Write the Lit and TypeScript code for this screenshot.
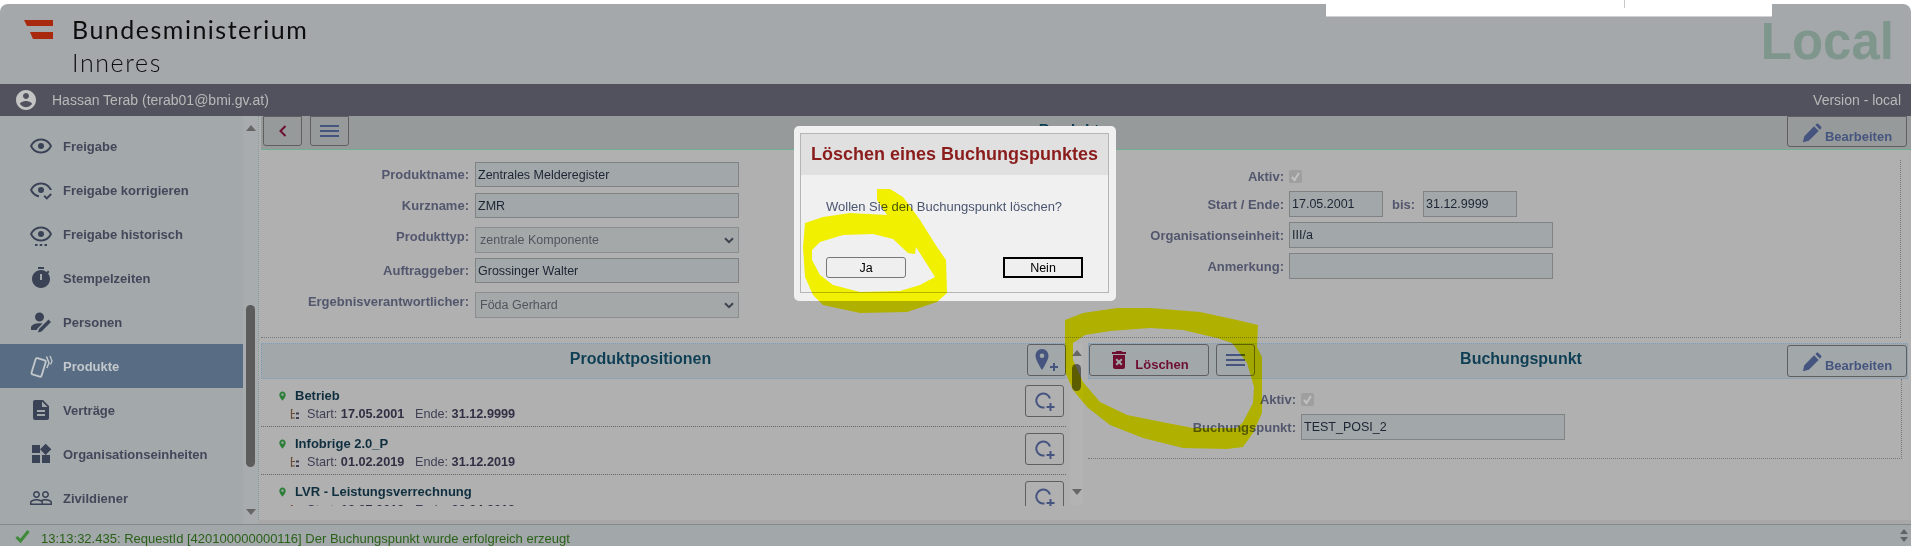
import { LitElement, html, css, svg } from "lit";
import { customElement } from "lit/decorators.js";

const P = {
  eye: "M12 6.5c3.79 0 7.17 2.13 8.82 5.5-1.65 3.37-5.02 5.5-8.82 5.5S4.83 15.37 3.18 12C4.83 8.63 8.21 6.5 12 6.5m0-2C7 4.5 2.73 7.61 1 12c1.73 4.39 6 7.5 11 7.5s9.27-3.11 11-7.5c-1.73-4.39-6-7.5-11-7.5zM12 9a3 3 0 1 0 0 6 3 3 0 0 0 0-6z",
  eyeCheck: "M12 4.5C7 4.5 2.73 7.61 1 12c1.5 3.8 4.9 6.6 9 7.3v-2.1C7 16.6 4.6 14.700 3.180 12 4.830 8.630 8.210 6.500 12 6.500s7.170 2.130 8.820 5.500h2.180C21.270 7.610 17 4.500 12 4.500zM12 9a3 3 0 1 0 0 6 3 3 0 0 0 0-6zM14.500 18.500l1.400-1.400 1.900 1.900 3.700-3.700 1.400 1.400-5.100 5.100z",
  eyeDots: "M12 4.500C7 4.500 2.730 7.610 1 12c1.730 4.390 6 7.500 11 7.500s9.270-3.110 11-7.500c-1.730-4.390-6-7.500-11-7.500zm0 2c3.790 0 7.170 2.130 8.820 5.500-1.650 3.370-5.020 5.500-8.820 5.500S4.830 15.370 3.180 12C4.830 8.630 8.210 6.500 12 6.500zM12 9a3 3 0 1 0 0 6 3 3 0 0 0 0-6zM6 22h2.500v2H6zm4.700 0h2.500v2h-2.500zm4.800 0H18v2h-2.500z",
  timer: "M15 1H9v2h6V1zm-4 13h2V8h-2v6zm8.030-6.610l1.420-1.420c-.43-.51-.9-.99-1.410-1.410l-1.420 1.420C16.070 4.740 14.120 4 12 4c-4.970 0-9 4.030-9 9s4.020 9 9 9 9-4.030 9-9c0-2.120-.74-4.070-1.970-5.610z",
  person: "M10.500 2.500a4.500 4.500 0 1 1 0 9 4.500 4.500 0 0 1 0-9zM2 20v-2.500c0-2.800 4.800-4.300 8.500-4.300 1 0 2 .1 3 .3L8.300 18.700 7.700 20zM19.500 9.500l2.500 2.500-9.500 9.500-3.500 1 1-3.500z",
  doc: "M14 2H6c-1.100 0-2 .9-2 2v16c0 1.100.9 2 2 2h12c1.100 0 2-.9 2-2V8l-6-6zm2 16H8v-2h8v2zm0-4H8v-2h8v2zm-3-5V3.500L18.500 9H13z",
  widgets: "M13 13v8h8v-8h-8zM3 21h8v-8H3v8zM3 3v8h8V3H3zm13.660-1.310L11 7.340 16.660 13l5.660-5.660-5.660-5.650z",
  people: "M16.500 13c-1.200 0-3.070.34-4.500 1-1.430-.67-3.300-1-4.500-1C5.330 13 1 14.080 1 16.250V19h22v-2.750c0-2.170-4.330-3.250-6.500-3.250zm-4 4.500h-10v-1.250c0-.54 2.560-1.750 5-1.750s5 1.210 5 1.750v1.250zm9 0H14v-1.250c0-.46-.2-.86-.52-1.220.88-.3 1.960-.53 3.020-.53 2.440 0 5 1.210 5 1.750v1.250zM7.500 12c1.930 0 3.500-1.570 3.500-3.500S9.430 5 7.500 5 4 6.570 4 8.500 5.570 12 7.500 12zm0-5.500c1.100 0 2 .9 2 2s-.9 2-2 2-2-.9-2-2 .9-2 2-2zm9 5.500c1.930 0 3.500-1.570 3.500-3.500S18.430 5 16.500 5 13 6.570 13 8.500s1.570 3.500 3.500 3.500zm0-5.500c1.100 0 2 .9 2 2s-.9 2-2 2-2-.9-2-2 .9-2 2-2z",
  account: "M12 2C6.480 2 2 6.480 2 12s4.480 10 10 10 10-4.480 10-10S17.520 2 12 2zm0 3c1.660 0 3 1.340 3 3s-1.340 3-3 3-3-1.340-3-3 1.340-3 3-3zm0 14.200c-2.500 0-4.710-1.280-6-3.220.03-1.990 4-3.080 6-3.080 1.990 0 5.970 1.090 6 3.080-1.290 1.940-3.500 3.220-6 3.220z",
  trash: "M6 19c0 1.100.9 2 2 2h8c1.100 0 2-.9 2-2V7H6v12zm2.460-7.120l1.410-1.410L12 12.590l2.120-2.120 1.410 1.410L13.410 14l2.120 2.120-1.410 1.410L12 15.410l-2.120 2.120-1.410-1.410L10.590 14l-2.130-2.120zM15.500 4l-1-1h-5l-1 1H5v2h14V4z",
  pencil: "M1 23 l1.800-7.200 L14.500 4 l5.500 5.500 L8.200 21.200 z M16 2.500 l1.300-1.300 c.7-.7 1.700-.7 2.400 0 l3.100 3.100 c.7.7.7 1.700 0 2.400 L21.500 8 z",
  pin: "M12 2C8.130 2 5 5.130 5 9c0 5.250 7 13 7 13s7-7.750 7-13c0-3.870-3.130-7-7-7zm0 9.500a2.500 2.500 0 1 1 0-5 2.500 2.500 0 0 1 0 5z",
};

const icon = (d: string, cls: string) =>
  html`<svg class="ic ${cls}" viewBox="0 0 24 24" aria-hidden="true">${svg`<path fill-rule="evenodd" d=${d}></path>`}</svg>`;

const cards = html`<svg class="ic side-ic" viewBox="0 0 24 24" aria-hidden="true">
  ${svg`<rect x="4.500" y="5" width="10.500" height="17" rx="1.500" transform="rotate(17 10 13)" fill="none" stroke="currentColor" stroke-width="1.800"></rect>
  <path d="M17.500 2.500 L20 9 L17.800 14" fill="none" stroke="currentColor" stroke-width="1.500"></path>
  <path d="M21 2 L23 7 L21.500 10.500" fill="none" stroke="currentColor" stroke-width="1.300"></path>`}
</svg>`;

const menuLines = html`<svg class="ic burger" viewBox="0 0 19 12" aria-hidden="true">
  ${svg`<path d="M0 1h19M0 6h19M0 11h19" fill="none" stroke="currentColor" stroke-width="2"></path>`}
</svg>`;

const chevron = html`<svg class="sel-arrow" viewBox="0 0 10 7" aria-hidden="true">
  ${svg`<path d="M1 1.200 L5 5.200 L9 1.200" fill="none" stroke="currentColor" stroke-width="2"></path>`}
</svg>`;

const checkBox = html`<span class="check"><svg viewBox="0 0 13 13" aria-hidden="true">
  ${svg`<path d="M3 7 L5.500 10 L10 3" fill="none" stroke="#c2c2c2" stroke-width="2"></path>`}
</svg></span>`;

const pinPlus = html`<svg class="ic pinplus" viewBox="0 0 24 23" aria-hidden="true">
  ${svg`<path fill-rule="evenodd" d="M7 0C3.200 0 .5 3 .5 6.800.5 11.500 7 21 7 21s6.500-9.500 6.500-14.200C13.500 3 10.800 0 7 0zm0 9a2.300 2.300 0 1 1 0-4.600A2.300 2.300 0 0 1 7 9z"></path>
  <path d="M15 18h8M19 14v8" fill="none" stroke="currentColor" stroke-width="2"></path>`}
</svg>`;

const ringPlus = html`<svg class="ic ringplus" viewBox="0 0 20 19" aria-hidden="true">
  ${svg`<path d="M9.500 15.500 A7 7 0 1 1 15 6.500" fill="none" stroke="currentColor" stroke-width="2"></path>
  <path d="M11.500 15h8M15.500 11v8" fill="none" stroke="currentColor" stroke-width="2"></path>`}
</svg>`;

const tree = html`<svg class="tree" viewBox="0 0 10 10" aria-hidden="true">
  ${svg`<path d="M1 0h2M1.500 0v10M1.500 4.500H5M1.500 9H5" fill="none" stroke="#6c4a38" stroke-width="1.200"></path>
  <path d="M6 3.500h3v2H6zM6 8h3v2H6z" fill="#3d3d55"></path>`}
</svg>`;

const arrowUp = html`<span class="tri up"></span>`;
const arrowDown = html`<span class="tri down"></span>`;

const NAV = [
  { t: "Freigabe", i: icon(P.eye, "side-ic") },
  { t: "Freigabe korrigieren", i: icon(P.eyeCheck, "side-ic") },
  { t: "Freigabe historisch", i: icon(P.eyeDots, "side-ic") },
  { t: "Stempelzeiten", i: icon(P.timer, "side-ic") },
  { t: "Personen", i: icon(P.person, "side-ic") },
  { t: "Produkte", i: cards, active: true },
  { t: "Verträge", i: icon(P.doc, "side-ic") },
  { t: "Organisationseinheiten", i: icon(P.widgets, "side-ic") },
  { t: "Zivildiener", i: icon(P.people, "side-ic") },
];

const POS = [
  { n: "Betrieb", s: "17.05.2001", e: "31.12.9999" },
  { n: "Infobrige 2.0_P", s: "01.02.2019", e: "31.12.2019" },
  { n: "LVR - Leistungsverrechnung", s: "18.07.2013", e: "30.04.2019" },
];

@customElement("app-root")
export class AppRoot extends LitElement {
  static styles = css`
    :host { display: block; width: 1913px; height: 546px; overflow: hidden; background: #fff; font-family: "Liberation Sans", Arial, sans-serif; }
    * { box-sizing: border-box; }
    .page { position: relative; width: 1911px; height: 546px; padding-top: 4px; display: flex; flex-direction: column; }
    .ic { fill: currentColor; display: block; flex: none; }

    .head { height: 80px; background: #a4a8aa; border-radius: 8px 8px 0 0; display: flex; padding: 16px 17px 0 24px; flex: none; }
    .flag { width: 29px; height: 19px; flex: none; }
    .brand { margin-left: 19px; margin-top: -7px; color: #0d0d0d; font-family: Lato, sans-serif; font-size: 25px; line-height: 33px; letter-spacing: 1.5px; }
    .brand .thin { font-weight: 300; letter-spacing: 1.6px; }
    .local { margin-left: auto; margin-top: -3px; font-weight: 700; font-size: 51px; line-height: 50px; color: #7f968d; }
    .tab { position: absolute; left: 1326px; top: 0; width: 446px; height: 17px; background: #fff; border-bottom: 1px solid #d0d0d0; }
    .tab i { position: absolute; left: 298px; top: 0; width: 1px; height: 8px; background: #c8c8c8; }

    .userbar { height: 32px; flex: none; background: #52525e; color: #b9b9b9; display: flex; align-items: center; padding: 0 10px 0 14px; font-size: 14px; }
    .userbar .acct { width: 24px; height: 24px; color: #c4c4c4; margin-right: 14px; }
    .userbar .ver { margin-left: auto; }

    .main { height: 408px; display: flex; flex: none; }
    .side { width: 243px; flex: none; background: #a3a8aa; padding-top: 8px; overflow: hidden; }
    .nav { height: 44px; display: flex; align-items: center; padding-left: 29px; font-weight: 700; font-size: 13px; color: #43475a; }
    .nav.on { background: #586c83; color: #c3c8cc; }
    .side-ic { width: 24px; height: 24px; margin-right: 10px; color: #3a4256; }
    .nav.on .side-ic { color: #c3c8cc; }

    .vscroll { width: 15px; flex: none; background: #a9acae; display: flex; flex-direction: column; align-items: center; padding: 9px 0 9px; }
    .vscroll .thumb { width: 9px; height: 162px; border-radius: 5px; background: #5c5c5c; margin-top: 174px; margin-bottom: auto; }
    .tri { display: block; width: 0; height: 0; border-left: 5px solid transparent; border-right: 5px solid transparent; flex: none; }
    .tri.up { border-bottom: 6px solid #666; }
    .tri.down { border-top: 6px solid #666; }

    .content { flex: 1; min-width: 0; background: #b0b0b0; border-bottom: 4px solid #a8a8a8; border-left: 1px dotted #7f9a9a; padding-left: 2px; display: flex; flex-direction: column; }
    .toolbar { height: 34px; flex: none; background: #979a9a; border-bottom: 1px solid #6fae8e; display: flex; align-items: flex-start; padding-left: 2px; padding-right: 4px; gap: 8px; }
    .toolbar .title { flex: 1; text-align: center; font-weight: 700; font-size: 16px; color: #0f3f55; margin-top: 6px; padding-left: 2px; line-height: 18px; }
    .btn { width: 39px; height: 32px; border: 1px solid #5f5f5f; border-radius: 3px; background: transparent; display: flex; align-items: center; justify-content: center; color: #46557f; padding: 0; flex: none; }
    .toolbar .btn { border-top-left-radius: 0; border-top-right-radius: 0; height: 30px; }
    .burger { width: 19px; height: 12px; }
    .back { width: 9px; height: 12px; }
    .wide { width: 120px; font-weight: 700; font-size: 13px; font-family: inherit; gap: 3px; }
    .wide span { margin-top: 9px; }
    .pencil { width: 20px; height: 20px; margin-top: 2px; }
    .toolbar .wide { height: 31px; }
    .phead .edit { margin-top: 1px; }
    .del { color: #6e0f30; gap: 4px; }
    .trash { width: 24px; height: 24px; margin-left: -2px; }

    .form { height: 188px; flex: none; display: flex; border-bottom: 1px dotted #777; margin-right: 10px; padding-top: 10px; }
    .fleft { width: 478px; padding-top: 2px; display: flex; flex-direction: column; }
    .fright { margin-left: auto; width: 817px; border-right: 1px dotted #777; display: flex; flex-direction: column; }
    .row { display: flex; align-items: center; gap: 6px; height: 25px; margin-bottom: 6px; flex: none; }
    .row.sel { height: 26px; margin-top: 3px; margin-bottom: 5px; }
    .row.sel.last { margin-top: 3px; }
    .row.sel .lab { margin-bottom: 8px; }
    .lab { font-weight: 700; font-size: 13px; color: #52576e; text-align: right; flex: none; }
    .fleft .lab { width: 208px; }
    .field { height: 100%; background: #a2a7a9; border: 1px solid #7f8384; padding: 0 2px; display: flex; align-items: center; font-size: 12.500px; color: #1d2433; flex: none; white-space: pre; }
    .fleft .field { width: 264px; }
    .selbox { background: #a4a8a8; border-color: #8a8e8e; color: #51565e; padding-left: 4px; justify-content: space-between; padding-right: 4px; }
    .sel-arrow { width: 10px; height: 7px; color: #3c4450; }
    .fright .row { height: 26px; margin: 0 0 5px; gap: 5px; }
    .fright .lab { width: 200px; }
    .fright .row.chk { height: 13px; margin: 10px 0 8px; }
    .f-date { width: 94px; }
    .fright .lab.bis { width: 23px; margin-left: 4px; margin-right: 3px; text-align: left; }
    .f-long { width: 264px; }
    .check { width: 13px; height: 13px; display: block; border-radius: 2px; background: #9f9f9f; flex: none; }
    .check svg { display: block; width: 13px; height: 13px; }

    .panels { flex: 1; display: flex; padding-top: 5px; min-height: 0; }
    .pl { width: 822px; flex: none; display: flex; }
    .plcol { width: 805px; flex: none; }
    .phead { height: 36px; background: #a2a7a9; border-top: 1px dotted #7f9fc0; border-bottom: 1px dotted #7f9fc0; display: flex; align-items: flex-start; }
    .pl .phead { border-left: 1px dotted #7f9fc0; }
    .ptitle { flex: 1; text-align: center; font-weight: 700; font-size: 16px; line-height: 30px; color: #0f3f55; }
    .pl .ptitle { padding-right: 8px; }
    .list { height: 127px; overflow: hidden; }
    .pos { height: 48px; border-bottom: 1px dotted #666; display: flex; justify-content: space-between; padding: 6px 2px 0 17px; flex: none; }
    .pinfo { padding-top: 2px; }
    .pname { display: flex; align-items: center; gap: 7px; font-weight: 700; font-size: 13px; line-height: 18px; color: #0f2f3f; }
    .gpin { width: 11px; height: 12px; color: #2e7f3a; margin-left: -1px; }
    .pdates { display: flex; align-items: center; font-size: 12.700px; line-height: 18px; color: #3f3f55; margin-left: 12px; white-space: pre; }
    .pdates b { color: #322f44; }
    .tree { width: 10px; height: 10px; margin-right: 7px; flex: none; }
    .ringplus { width: 20px; height: 19px; }
    .pinplus { width: 24px; height: 23px; }
    .ps { width: 13px; height: 162px; margin-left: 4px; background: #b3b3b3; display: flex; flex-direction: column; align-items: center; padding: 7px 0 10px; flex: none; }
    .ps .thumb { width: 9px; height: 27px; background: #5c5c5c; border-radius: 5px; margin-top: 8px; margin-bottom: auto; }

    .pr { width: 820px; flex: none; margin-left: 5px; }
    .pr .phead { border-left: 1px dotted #7f9fc0; border-right: 1px dotted #7f9fc0; gap: 7px; }
    .prbody { height: 80px; width: 814px; border-bottom: 1px dotted #777; border-right: 1px dotted #777; display: flex; flex-direction: column; }
    .pr .lab { width: 208px; }
    .pr .row { gap: 5px; margin: 0; }
    .pr .row.chk { height: 13px; margin-top: 14px; margin-bottom: 8px; }
    .pr .row.txt { height: 26px; }
    .f-bp { width: 264px; }

    .status { flex: 1; background: #a2a7a9; border-top: 1px solid #85898c; display: flex; align-items: center; padding: 5px 0 0 15px; font-size: 13px; color: #2a6118; position: relative; }
    .okic { width: 15px; height: 14px; margin-right: 11px; margin-top: -5px; }
    .spin { margin-left: auto; margin-right: 3px; margin-top: -5px; display: flex; flex-direction: column; gap: 3px; }
    .spin .tri { border-left-width: 4px; border-right-width: 4px; }
    .spin .tri.up { border-bottom: 5px solid #5f646a; }
    .spin .tri.down { border-top: 5px solid #5f646a; }

    .modal { position: absolute; left: 794px; top: 126px; width: 322px; height: 175px; background: #f0f0f0; border-radius: 5px; padding: 7px 7px 8px 6px; }
    .minner { height: 100%; border: 1px solid #b5b5b5; display: flex; flex-direction: column; }
    .mtitle { height: 41px; flex: none; background: #e0e0e0; color: #8b1c1c; font-weight: 700; font-size: 18px; display: flex; align-items: center; justify-content: center; white-space: nowrap; }
    .mtext { margin-top: 24px; padding-left: 25px; font-size: 13px; line-height: 16px; color: #4a5570; white-space: nowrap; }
    .mbtns { margin-top: auto; margin-bottom: 14px; padding: 0 25px; display: flex; justify-content: space-between; }
    .mb { width: 80px; height: 21px; font-family: inherit; font-size: 12.500px; color: #000; background: #efefef; border: 1px solid #777; border-radius: 3px; padding: 0; }
    .mb.def { border: 2px solid #000; border-radius: 0; }

    .ink { position: absolute; left: 0; top: 0; width: 1913px; height: 546px; mix-blend-mode: multiply; pointer-events: none; }
  `;

  private form() {
    return html`<div class="form">
      <div class="fleft">
        <div class="row"><span class="lab">Produktname:</span><span class="field">Zentrales Melderegister</span></div>
        <div class="row"><span class="lab">Kurzname:</span><span class="field">ZMR</span></div>
        <div class="row sel"><span class="lab">Produkttyp:</span><span class="field selbox">zentrale Komponente${chevron}</span></div>
        <div class="row"><span class="lab">Auftraggeber:</span><span class="field">Grossinger Walter</span></div>
        <div class="row sel last"><span class="lab">Ergebnisverantwortlicher:</span><span class="field selbox">Föda Gerhard${chevron}</span></div>
      </div>
      <div class="fright">
        <div class="row chk"><span class="lab">Aktiv:</span>${checkBox}</div>
        <div class="row"><span class="lab">Start / Ende:</span><span class="field f-date">17.05.2001</span><span class="lab bis">bis:</span><span class="field f-date">31.12.9999</span></div>
        <div class="row"><span class="lab">Organisationseinheit:</span><span class="field f-long">III/a</span></div>
        <div class="row"><span class="lab">Anmerkung:</span><span class="field f-long"></span></div>
      </div>
    </div>`;
  }

  private bearbeiten() {
    return html`<button class="btn wide edit">${icon(P.pencil, "pencil")}<span>Bearbeiten</span></button>`;
  }

  render() {
    return html`<div class="page">
      <header class="head">
        <svg class="flag" viewBox="0 0 29 19" aria-hidden="true">
          ${svg`<path d="M0 0H29V6H3z" fill="#a9290f"></path><path d="M6 12H29V19H9z" fill="#a9290f"></path>`}
        </svg>
        <div class="brand"><div>Bundesministerium</div><div class="thin">Inneres</div></div>
        <div class="local">Local</div>
      </header>
      <div class="userbar">
        ${icon(P.account, "acct")}<span>Hassan Terab (terab01@bmi.gv.at)</span><span class="ver">Version - local</span>
      </div>
      <div class="main">
        <nav class="side">
          ${NAV.map((n) => html`<div class="nav ${n.active ? "on" : ""}">${n.i}<span>${n.t}</span></div>`)}
        </nav>
        <div class="vscroll">${arrowUp}<div class="thumb"></div>${arrowDown}</div>
        <section class="content">
          <div class="toolbar">
            <button class="btn"><svg class="back" viewBox="0 0 9 12" aria-hidden="true">${svg`<path d="M7.500 1 L2.500 6 L7.500 11" fill="none" stroke="#6e0f30" stroke-width="2"></path>`}</svg></button>
            <button class="btn">${menuLines}</button>
            <div class="title">Produkt</div>
            ${this.bearbeiten()}
          </div>
          ${this.form()}
          <div class="panels">
            <div class="pl">
              <div class="plcol">
                <div class="phead"><div class="ptitle">Produktpositionen</div><button class="btn">${pinPlus}</button></div>
                <div class="list">
                  ${POS.map((p) => html`<div class="pos">
                    <div class="pinfo">
                      <div class="pname">${icon(P.pin, "gpin")}<span>${p.n}</span></div>
                      <div class="pdates">${tree}Start: <b>${p.s}</b>   Ende: <b>${p.e}</b></div>
                    </div>
                    <button class="btn">${ringPlus}</button>
                  </div>`)}
                </div>
              </div>
              <div class="ps">${arrowUp}<div class="thumb"></div>${arrowDown}</div>
            </div>
            <div class="pr">
              <div class="phead">
                <button class="btn wide del">${icon(P.trash, "trash")}<span>Löschen</span></button>
                <button class="btn">${menuLines}</button>
                <div class="ptitle">Buchungspunkt</div>
                ${this.bearbeiten()}
              </div>
              <div class="prbody">
                <div class="row chk"><span class="lab">Aktiv:</span>${checkBox}</div>
                <div class="row txt"><span class="lab">Buchungspunkt:</span><span class="field f-bp">TEST_POSI_2</span></div>
              </div>
            </div>
          </div>
        </section>
      </div>
      <footer class="status">
        <svg class="ic okic" viewBox="0 0 15 14" aria-hidden="true">${svg`<path d="M1.500 8 L5.500 12 L13.500 2" fill="none" stroke="#3f8a3a" stroke-width="3"></path>`}</svg>
        <span>13:13:32.435: RequestId [420100000000116] Der Buchungspunkt wurde erfolgreich erzeugt</span>
        <div class="spin">${arrowUp}${arrowDown}</div>
      </footer>

      <div class="tab"><i></i></div>

      <div class="modal">
        <div class="minner">
          <div class="mtitle">Löschen eines Buchungspunktes</div>
          <div class="mtext">Wollen Sie den Buchungspunkt löschen?</div>
          <div class="mbtns"><button class="mb">Ja</button><button class="mb def">Nein</button></div>
        </div>
      </div>

      <svg class="ink" viewBox="0 0 1913 546" aria-hidden="true">
        ${svg`<path fill="#ffff00" fill-rule="evenodd" d="M877 189 L890 189 L903 197 L920 220 L937 247 L946 260 L947 293 L937 302 L907 312 L860 313 L823 305 L813 295 L805 277 L803 247 L805 223 L823 217 L850 213 L887 215 L877 200 Z
          M812 250 L820 242 L843 235 L873 234 L893 239 L908 253 L915 254 L916 247 L935 277 L920 285 L900 291 L860 292 L833 285 L820 275 L812 260 Z"></path>
        <path fill="#ffff00" fill-rule="evenodd" d="M1065 320 L1083 313 L1117 308 L1150 308 L1200 312 L1237 320 L1258 325 L1257 347 L1262 357 L1262 413 L1253 433 L1243 447 L1227 449 L1183 448 L1143 438 L1110 425 L1087 407 L1073 390 L1065 372 Z
          M1073 343 L1085 335 L1110 331 L1150 328 L1183 330 L1217 338 L1232 343 L1247 363 L1254 387 L1253 403 L1243 422 L1237 428 L1193 428 L1167 423 L1127 415 L1100 402 L1083 382 L1073 360 Z"></path>`}
      </svg>
    </div>`;
  }
}
